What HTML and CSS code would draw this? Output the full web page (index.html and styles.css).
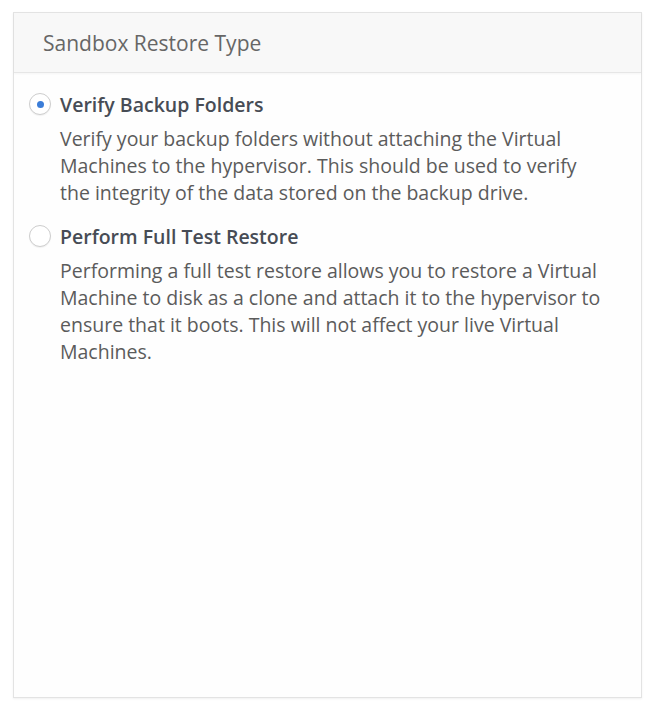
FILE: index.html
```html
<!DOCTYPE html>
<html>
<head>
<meta charset="utf-8">
<link rel="stylesheet" href="styles.css">
</head>
<body>
<div class="panel">
  <div class="panel-header">Sandbox Restore Type</div>
  <div class="panel-body">
    <div class="option">
      <div class="option-row">
        <span class="radio checked"><span class="dot"></span></span>
        <span class="label">Verify Backup Folders</span>
      </div>
      <p class="desc">Verify your backup folders without attaching the Virtual Machines to the hypervisor. This should be used to verify the integrity of the data stored on the backup drive.</p>
    </div>
    <div class="option">
      <div class="option-row">
        <span class="radio"></span>
        <span class="label">Perform Full Test Restore</span>
      </div>
      <p class="desc">Performing a full test restore allows you to restore a Virtual Machine to disk as a clone and attach it to the hypervisor to ensure that it boots. This will not affect your live Virtual Machines.</p>
    </div>
  </div>
</div>
</body>
</html>
```

FILE: styles.css
```css
html, body {
  margin: 0;
  background: #ffffff;
}
body {
  padding: 12px 10px 14px 13px;
  font-family: "Open Sans", "Noto Sans", sans-serif;
}
.panel {
  width: 627px;
  height: 684px;
  border: 1px solid #e3e3e3;
  box-shadow: 0 1px 2px rgba(0,0,0,0.06);
  background: #fefefe;
  display: flex;
  flex-direction: column;
}
.panel-header {
  height: 59px;
  background: #f8f8f8;
  border-bottom: 1px solid #e6e6e6;
  box-shadow: 0 1px 2px rgba(0,0,0,0.04);
  display: flex;
  align-items: center;
  padding-left: 29px;
  font-size: 21px;
  color: #666666;
}
.panel-body {
  padding: 19px 16px 0 15px;
  display: flex;
  flex-direction: column;
  gap: 18px;
}
.option-row {
  display: flex;
  align-items: center;
  gap: 9px;
  height: 24px;
}
.radio {
  width: 20px;
  height: 20px;
  border: 1px solid #cdcdcd;
  border-radius: 50%;
  display: flex;
  align-items: center;
  justify-content: center;
  background: #fff;
  box-shadow: 0 1px 1px rgba(0,0,0,0.05);
  flex: none;
}
.dot {
  width: 7px;
  height: 7px;
  border-radius: 50%;
  background: #3b7dd8;
}
.label {
  font-weight: 600;
  font-size: 19.5px;
  color: #474c55;
}
.desc {
  margin: 9px 0 0 31px;
  max-width: 545px;
  font-size: 19.5px;
  line-height: 27px;
  color: #5b5b5b;
}
```
